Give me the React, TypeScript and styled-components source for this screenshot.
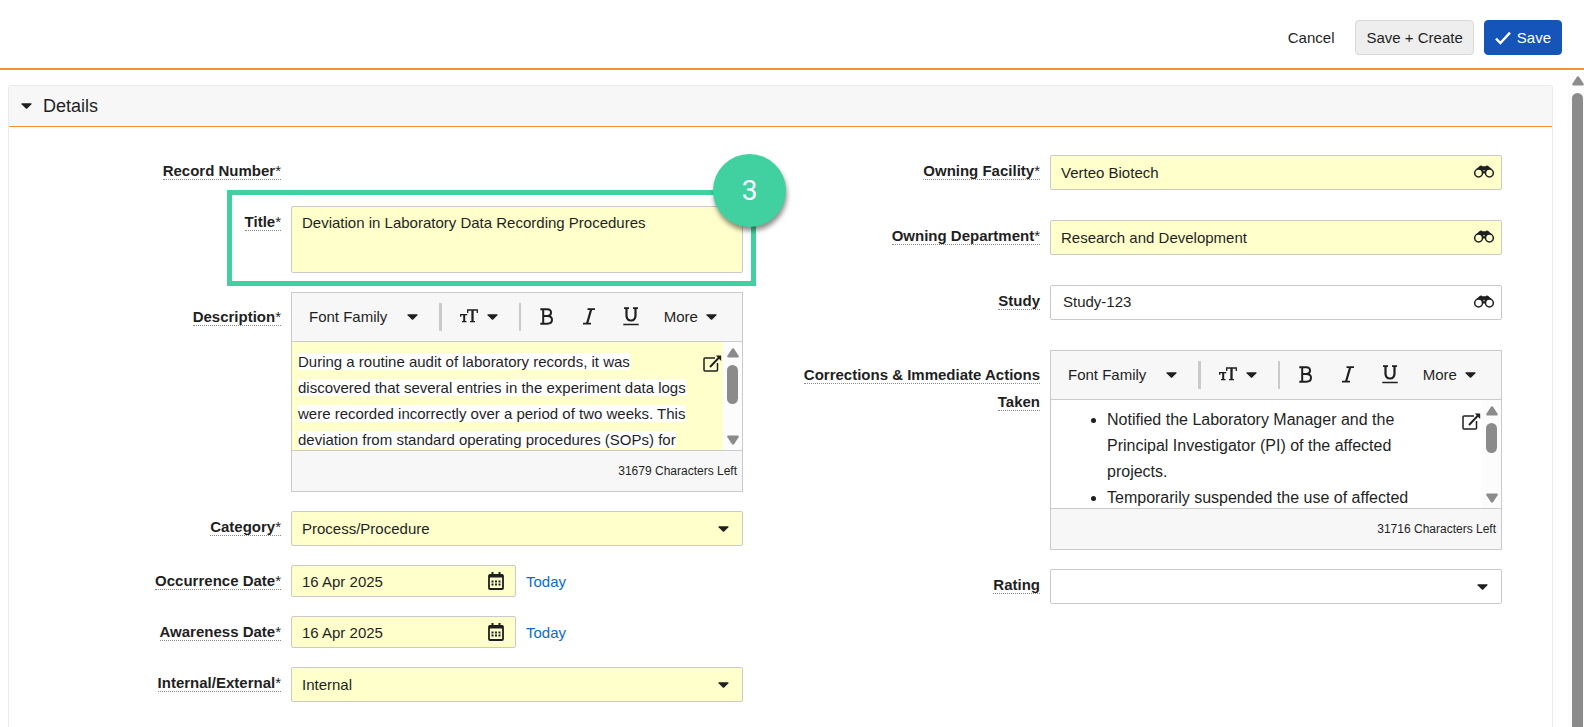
import React from "react";
import styled, { createGlobalStyle, css } from "styled-components";

const color = {
  text: "#1f1f1f",
  line: "#cacaca",
  required: "#ffffcc",
  soft: "#f7f7f7",
  orange: "#f59331",
  green: "#41d1a0",
  blue: "#1554b9",
  link: "#0b6bcb",
  thumb: "#8b8b8b",
};

const GlobalStyle = createGlobalStyle`
  *, *::before, *::after { box-sizing: border-box; }
  body {
    margin: 0;
    background: #fff;
    color: ${color.text};
    font: 15px/17px "Liberation Sans", Arial, sans-serif;
  }
  button, input, select, textarea { font: inherit; color: inherit; }
  svg { display: block; flex: none; }
`;

const Page = styled.div`
  display: flex;
  flex-direction: column;
  height: 100vh;
  overflow: hidden;
`;

const ActionBar = styled.header`
  display: flex;
  flex: none;
  align-items: center;
  justify-content: flex-end;
  gap: 10px;
  padding: 20px 22px 13px;
  border-bottom: 2px solid ${color.orange};
`;

const Button = styled.button<{ $kind: "plain" | "neutral" | "primary" }>`
  display: flex;
  align-items: center;
  gap: 6px;
  height: 35px;
  padding: 0 10px;
  border: 1px solid transparent;
  border-radius: 4px;
  background: transparent;
  cursor: pointer;
  ${(p) =>
    p.$kind === "neutral" &&
    css`
      background: #eee;
      border-color: #d8d8d8;
    `}
  ${(p) =>
    p.$kind === "primary" &&
    css`
      background: ${color.blue};
      border-color: ${color.blue};
      color: #fff;
    `}
`;

const Body = styled.div`
  display: flex;
  flex: 1;
  min-height: 0;
`;

const Content = styled.main`
  display: flex;
  flex: 1;
  min-width: 0;
  overflow: hidden;
  padding: 15px 15px 0 8px;
`;

const Panel = styled.section`
  flex: 1;
  border: 1px solid #ebebeb;
  border-bottom: 0;
  border-radius: 3px 3px 0 0;
`;

const PanelHeader = styled.button`
  display: flex;
  align-items: center;
  gap: 11px;
  width: 100%;
  height: 41px;
  padding: 0 12px;
  border: 0;
  border-bottom: 1px solid ${color.orange};
  background: ${color.soft};
  text-align: left;
  cursor: pointer;
`;

const PanelTitle = styled.span`
  font-size: 18px;
  line-height: 20px;
`;

const Columns = styled.form`
  display: grid;
  grid-template-columns: 1fr 1fr;
  gap: 50px;
  padding: 28px 50px 20px 25px;
`;

const Column = styled.div`
  display: flex;
  flex-direction: column;
  gap: 19px;
  min-width: 0;
`;

const Row = styled.div<{ $tall?: boolean }>`
  display: grid;
  grid-template-columns: minmax(0, 247fr) minmax(0, 452fr);
  column-gap: 10px;
  align-items: start;
  min-height: ${(p) => (p.$tall ? 46 : 32)}px;
`;

const LabelBox = styled.div<{ $editor?: boolean }>`
  padding-top: ${(p) => (p.$editor ? 11 : 2)}px;
  text-align: right;
  line-height: 27px;
`;

const Label = styled.label`
  border-bottom: 1px dotted #8a8a8a;
  font-weight: 700;
`;

const Star = styled.span`
  font-weight: 400;
`;

const Control = styled.div`
  position: relative;
  display: flex;
  align-items: center;
  gap: 10px;
`;

const fieldBox = css<{ $required?: boolean }>`
  display: block;
  width: 100%;
  height: 35px;
  margin: 0;
  padding: 0 10px;
  border: 1px solid ${color.line};
  border-radius: 2px;
  background: ${(p) => (p.$required ? color.required : "#fff")};
  outline: none;
`;

const TextField = styled.input<{ $required?: boolean }>`
  ${fieldBox}
`;

const LookupField = styled(TextField)`
  ${(p) =>
    !p.$required &&
    css`
      padding: 0 12px 2px;
    `}
`;

const SelectField = styled.select<{ $required?: boolean }>`
  ${fieldBox}
  appearance: none;
`;

const TextArea = styled.textarea<{ $required?: boolean }>`
  ${fieldBox}
  height: 67px;
  padding: 7px 10px;
  resize: none;
`;

const DateBox = styled.div`
  position: relative;
  width: 225px;
`;

const DateField = styled(TextField)`
  height: 32px;
`;

const FieldIcon = styled.span<{ $right: number; $raised?: boolean }>`
  position: absolute;
  top: 0;
  bottom: ${(p) => (p.$raised ? 3 : 0)}px;
  right: ${(p) => p.$right}px;
  display: flex;
  align-items: center;
  pointer-events: none;
`;

const IconButton = styled.button`
  display: flex;
  padding: 0;
  border: 0;
  background: none;
  pointer-events: auto;
  cursor: pointer;
`;

const TodayLink = styled.a`
  color: ${color.link};
  text-decoration: none;
`;

const Frame = styled.div`
  position: absolute;
  inset: -16px -13px -13px -64px;
  border: 5px solid ${color.green};
  pointer-events: none;
`;

const Badge = styled.span`
  position: absolute;
  top: -41px;
  right: -35px;
  display: flex;
  align-items: center;
  justify-content: center;
  width: 73px;
  height: 73px;
  border-radius: 50%;
  background: ${color.green};
  box-shadow: 1px 4px 5px rgba(0, 0, 0, 0.45);
  color: #fff;
  font: 400 28px/32px Roboto, sans-serif;
`;

const Editor = styled.div`
  flex: 1;
  min-width: 0;
  border: 1px solid ${color.line};
`;

const Toolbar = styled.div`
  display: flex;
  align-items: center;
  height: 49px;
  padding: 0 25px 1px 17px;
  border-bottom: 1px solid ${color.line};
  background: ${color.soft};
`;

const Tool = styled.button<{ $gap?: number }>`
  display: flex;
  flex: none;
  align-items: center;
  gap: ${(p) => p.$gap ?? 0}px;
  padding: 0;
  border: 0;
  background: none;
  white-space: nowrap;
  cursor: pointer;
`;

const StyleTool = styled(Tool)`
  justify-content: center;
  width: 18px;
`;

const Divider = styled.span<{ $wide?: boolean }>`
  flex: none;
  width: ${(p) => (p.$wide ? 3 : 2)}px;
  height: 28px;
  margin: 0 ${(p) => (p.$wide ? 18 : 16)}px 0 21px;
  background: ${color.line};
`;

const Styles = styled.div`
  display: flex;
  flex: 1;
  align-items: center;
  justify-content: space-between;
`;

const EditorArea = styled.div<{ $required?: boolean }>`
  position: relative;
  display: flex;
  height: 108px;
  overflow: hidden;
  background: ${(p) => (p.$required ? color.required : "#fff")};
`;

const RichText = styled.div<{ $large?: boolean }>`
  flex: 1;
  min-width: 0;
  padding: 7px 28px 0 6px;
  font-size: ${(p) => (p.$large ? 16 : 15)}px;
  line-height: 26px;
  outline: none;

  p, ul { margin: 0; }
  ul { padding-left: 50px; }
  mark { background: #fff; color: inherit; }
`;

const Expand = styled(IconButton)`
  position: absolute;
  top: 13px;
  right: 20px;
`;

const EditorFooter = styled.div`
  display: flex;
  align-items: center;
  justify-content: flex-end;
  height: 41px;
  padding: 0 5px;
  border-top: 1px solid ${color.line};
  background: ${color.soft};
  font-size: 12px;
`;

const EditorTrack = styled.div`
  display: flex;
  flex: none;
  flex-direction: column;
  align-items: center;
  width: 19px;
  padding: 6px 0 5px;
  background: #fcfcfc;
`;

const EditorThumb = styled.div<{ $size: number }>`
  width: 11px;
  height: ${(p) => p.$size}px;
  margin: 7px 0 auto;
  border-radius: 6px;
  background: ${color.thumb};
`;

const PageTrack = styled.div`
  display: flex;
  flex: none;
  flex-direction: column;
  align-items: flex-end;
  gap: 7px;
  width: 16px;
  padding-top: 6px;
  background: #fcfcfc;
`;

const PageThumb = styled.div`
  flex: 1;
  width: 11px;
  margin-right: 1px;
  border-radius: 6px 6px 0 0;
  background: ${color.thumb};
`;

const Caret = () => (
  <svg width="11" height="6" viewBox="0 0 11 6" aria-hidden="true">
    <path d="M.8.2h9.400q.8.3.2 1L6.200 5.400q-.7.6-1.400 0L.6 1.200Q0 .5.8.2z" fill={color.text} />
  </svg>
);

const ScrollArrow = ({ down }: { down?: boolean }) => (
  <svg width="12" height="10" viewBox="0 0 12 10" aria-hidden="true">
    <path
      d={
        down
          ? "M1 .5h10q1.200.6.6 1.700L7.200 9q-1.200 1.300-2.400 0L.4 2.200Q-.2 1.100 1 .5z"
          : "M1 9.500h10q1.200-.6.6-1.700L7.200 1Q6-.3 4.800 1L.4 7.800Q-.2 8.900 1 9.500z"
      }
      fill={color.thumb}
    />
  </svg>
);

const CheckIcon = () => (
  <svg width="16" height="14" viewBox="0 0 16 14" aria-hidden="true">
    <path d="M1 7.600 5.400 12 15 1.600" fill="none" stroke="#fff" strokeWidth="2.400" />
  </svg>
);

const BinocularsIcon = () => (
  <svg width="20" height="13" viewBox="0 0 20 13" aria-hidden="true">
    <g fill="none" stroke={color.text} strokeWidth="1.500">
      <circle cx="4.600" cy="8" r="3.900" />
      <circle cx="15.400" cy="8" r="3.900" />
    </g>
    <path
      d="M2 4.600 5.400 1.200Q6.200.4 7.400.5l1 .7h3.200l1-.7q1.200-.1 2 .7L18 4.600q-1.600-.9-3.400-.6-2.200.5-3 2.800L11 8.400H9l-.6-1.600Q7.600 4.500 5.400 4 3.600 3.700 2 4.600z"
      fill={color.text}
    />
    <circle cx="10" cy="5.600" r=".9" fill="#aaa" />
  </svg>
);

const CalendarIcon = () => (
  <svg width="16" height="18" viewBox="0 0 16 18" aria-hidden="true">
    <rect x="1" y="3" width="14" height="14" rx="1" fill="none" stroke={color.text} strokeWidth="1.800" />
    <path d="M1 2.500h14v3H1zM3.500 0h2v4h-2zM10.500 0h2v4h-2z" fill={color.text} />
    <path
      d="M3.500 8.500h2v2h-2zM7 8.500h2v2H7zM10.500 8.500h2v2h-2zM3.500 11.500h2v2h-2zM7 11.500h2v2H7zM10.500 11.500h2v2h-2z"
      fill={color.text}
    />
  </svg>
);

const ExpandIcon = () => (
  <svg width="19" height="17" viewBox="0 0 19 17" aria-hidden="true">
    <g fill="none" stroke={color.text}>
      <path d="M12 3H2Q1 3 1 4v11q0 1 1 1h11.500q1 0 1-1V8" strokeWidth="1.500" />
      <path d="M7 12 16.500 2" strokeWidth="1.900" />
    </g>
    <path d="M12.800.6h5.400V6z" fill={color.text} />
  </svg>
);

const SizeIcon = () => (
  <svg width="18" height="16" viewBox="0 0 18 16" aria-hidden="true">
    <g fill="none" stroke={color.text}>
      <path d="M7.700 4V1h9.600v3M10 12.700h5" strokeWidth="1.300" />
      <path d="M12.500 1v11.500" strokeWidth="2.300" />
      <path d="M.7 7.800V5.700h6.600M2 12.700h4.500" strokeWidth="1.300" />
      <path d="M4.200 5.500v7" strokeWidth="2" />
    </g>
  </svg>
);

const BoldIcon = () => (
  <svg width="13" height="17" viewBox="0 0 13 17" aria-hidden="true">
    <path
      d="M.3 1.300H7.200Q11 1.400 11 4.600 11 8 7.200 8H3.200M7.200 8Q12 8.100 12 11.800 12 15.700 7.200 15.700H.3M3.200 1.300v14.400"
      fill="none"
      stroke={color.text}
      strokeWidth="2"
    />
  </svg>
);

const ItalicIcon = () => (
  <svg width="12" height="17" viewBox="0 0 12 17" aria-hidden="true">
    <path d="M4.500 1.200H12M0 15.700H8" stroke={color.text} strokeWidth="1.700" />
    <path d="M8.200 1.200 4 15.700" stroke={color.text} strokeWidth="2.200" />
  </svg>
);

const UnderlineIcon = () => (
  <svg width="16" height="19" viewBox="0 0 16 19" aria-hidden="true">
    <g fill="none" stroke={color.text}>
      <path d="M1 1.200h5M10 1.200h5M.3 17.500h15.400" strokeWidth="1.700" />
      <path d="M3.500 1.200v7.600Q3.700 13.500 8 13.500T12.500 8.800V1.200" strokeWidth="2.200" />
    </g>
  </svg>
);

type FieldProps = {
  id: string;
  label: string;
  required?: boolean;
  editor?: boolean;
  tall?: boolean;
  children?: React.ReactNode;
};

const Field = ({ id, label, required, editor, tall, children }: FieldProps) => (
  <Row $tall={tall}>
    <LabelBox $editor={editor}>
      <Label htmlFor={id} id={`${id}-label`}>
        {label}
        {required && <Star>*</Star>}
      </Label>
    </LabelBox>
    <Control>{children}</Control>
  </Row>
);

const SelectRow = ({ id, label, value, required }: { id: string; label: string; value: string; required?: boolean }) => (
  <Field id={id} label={label} required={required}>
    <SelectField id={id} defaultValue={value} $required={required}>
      <option value={value}>{value}</option>
    </SelectField>
    <FieldIcon $right={14}>
      <Caret />
    </FieldIcon>
  </Field>
);

const DateRow = ({ id, label, value }: { id: string; label: string; value: string }) => (
  <Field id={id} label={label} required>
    <DateBox>
      <DateField id={id} type="text" defaultValue={value} $required />
      <FieldIcon $right={12}>
        <IconButton type="button" aria-label={`Choose ${label}`}>
          <CalendarIcon />
        </IconButton>
      </FieldIcon>
    </DateBox>
    <TodayLink href="#today">Today</TodayLink>
  </Field>
);

const LookupRow = ({ id, label, value, required }: { id: string; label: string; value: string; required?: boolean }) => (
  <Field id={id} label={label} required={required} tall>
    <LookupField id={id} type="text" defaultValue={value} $required={required} />
    <FieldIcon $right={8} $raised>
      <IconButton type="button" aria-label={`Look up ${label}`}>
        <BinocularsIcon />
      </IconButton>
    </FieldIcon>
  </Field>
);

type EditorRowProps = {
  id: string;
  label: string;
  required?: boolean;
  large?: boolean;
  left: number;
  thumb: number;
  children: React.ReactNode;
};

const EditorRow = ({ id, label, required, large, left, thumb, children }: EditorRowProps) => (
  <Field id={id} label={label} required={required} editor>
    <Editor>
      <Toolbar>
        <Tool type="button" $gap={20}>
          Font Family
          <Caret />
        </Tool>
        <Divider $wide />
        <Tool type="button" aria-label="Font size" $gap={9}>
          <SizeIcon />
          <Caret />
        </Tool>
        <Divider />
        <Styles>
          <StyleTool type="button" aria-label="Bold">
            <BoldIcon />
          </StyleTool>
          <StyleTool type="button" aria-label="Italic">
            <ItalicIcon />
          </StyleTool>
          <StyleTool type="button" aria-label="Underline">
            <UnderlineIcon />
          </StyleTool>
          <Tool type="button" $gap={8}>
            More
            <Caret />
          </Tool>
        </Styles>
      </Toolbar>
      <EditorArea $required={required}>
        <RichText
          id={id}
          role="textbox"
          aria-multiline="true"
          aria-labelledby={`${id}-label`}
          contentEditable
          suppressContentEditableWarning
          spellCheck={false}
          $large={large}
        >
          {children}
        </RichText>
        <Expand type="button" aria-label={`Expand ${label}`}>
          <ExpandIcon />
        </Expand>
        <EditorTrack>
          <ScrollArrow />
          <EditorThumb $size={thumb} />
          <ScrollArrow down />
        </EditorTrack>
      </EditorArea>
      <EditorFooter>{left} Characters Left</EditorFooter>
    </Editor>
  </Field>
);

export default function App() {
  return (
    <Page>
      <GlobalStyle />
      <ActionBar>
        <Button type="button" $kind="plain">
          Cancel
        </Button>
        <Button type="button" $kind="neutral">
          Save + Create
        </Button>
        <Button type="button" $kind="primary">
          <CheckIcon />
          Save
        </Button>
      </ActionBar>
      <Body>
        <Content>
          <Panel>
            <PanelHeader type="button" aria-expanded="true">
              <Caret />
              <PanelTitle>Details</PanelTitle>
            </PanelHeader>
            <Columns>
              <Column>
                <Field id="record-number" label="Record Number" required />
                <Field id="title" label="Title" required>
                  <TextArea id="title" defaultValue="Deviation in Laboratory Data Recording Procedures" spellCheck={false} $required />
                  <Frame>
                    <Badge>3</Badge>
                  </Frame>
                </Field>
                <EditorRow id="description" label="Description" required left={31679} thumb={39}>
                  <p>
                    <mark>
                      During a routine audit of laboratory records, it was discovered that several entries in the experiment
                      data logs were recorded incorrectly over a period of two weeks. This deviation from standard operating
                      procedures (SOPs) for
                    </mark>
                  </p>
                </EditorRow>
                <SelectRow id="category" label="Category" value="Process/Procedure" required />
                <DateRow id="occurrence" label="Occurrence Date" value="16 Apr 2025" />
                <DateRow id="awareness" label="Awareness Date" value="16 Apr 2025" />
                <SelectRow id="internal-external" label="Internal/External" value="Internal" required />
              </Column>
              <Column>
                <LookupRow id="facility" label="Owning Facility" value="Verteo Biotech" required />
                <LookupRow id="department" label="Owning Department" value="Research and Development" required />
                <LookupRow id="study" label="Study" value="Study-123" />
                <EditorRow id="corrections" label="Corrections & Immediate Actions Taken" large left={31716} thumb={30}>
                  <ul>
                    <li>Notified the Laboratory Manager and the Principal Investigator (PI) of the affected projects.</li>
                    <li>Temporarily suspended the use of affected</li>
                  </ul>
                </EditorRow>
                <SelectRow id="rating" label="Rating" value="" />
              </Column>
            </Columns>
          </Panel>
        </Content>
        <PageTrack>
          <ScrollArrow />
          <PageThumb />
        </PageTrack>
      </Body>
    </Page>
  );
}
